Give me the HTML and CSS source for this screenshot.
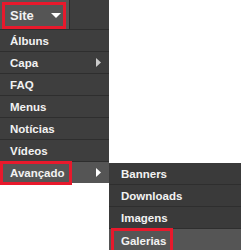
FILE: index.html
```html
<!DOCTYPE html>
<html>
<head>
  <title>Menu</title>
  <link rel="stylesheet" href="styles.css">
</head>
<body>
  <div class="nav">
    <div class="menu">
      <div class="site-row">
        <div class="site-btn">
          <span class="mark site-mark">Site
            <svg class="caret-down" width="10" height="5" viewBox="0 0 10 5"><path d="M0 0H10L5 5Z" fill="#fff"/></svg>
          </span>
        </div>
      </div>
      <div class="item">Álbuns</div>
      <div class="item">Capa
        <svg class="caret-right" width="5" height="9" viewBox="0 0 5 9"><path d="M0 0L5 4.5L0 9Z" fill="#ccc"/></svg>
      </div>
      <div class="item">FAQ</div>
      <div class="item">Menus</div>
      <div class="item">Notícias</div>
      <div class="item">Vídeos</div>
      <div class="item active">
        <span class="mark adv-mark">Avançado</span>
        <svg class="caret-right" width="5" height="9" viewBox="0 0 5 9"><path d="M0 0L5 4.5L0 9Z" fill="#fff"/></svg>
      </div>
    </div>
    <div class="submenu">
      <div class="item">Banners</div>
      <div class="item">Downloads</div>
      <div class="item">Imagens</div>
      <div class="item active"><span class="mark gal-mark">Galerias</span></div>
    </div>
  </div>
</body>
</html>
```

FILE: styles.css
```css
:root {
  --bg-menu: #3e3e3e;
  --bg-active: #555555;
  --line: #2e2e2e;
  --text: #f2f2f2;
  --red: #e8192c;
}

body {
  margin: 0;
  background: #ffffff;
  font-family: 'Liberation Sans', Arial, sans-serif;
  font-size: 11.5px;
  font-weight: bold;
  color: var(--text);
}

.nav {
  display: flex;
  align-items: flex-start;
}

.menu {
  width: 109px;
  background: var(--bg-menu);
}

.site-row {
  display: flex;
  height: 29px;
  border-bottom: 1px solid var(--line);
}

.site-btn {
  width: 70px;
  background: var(--bg-active);
  border-right: 1px solid #2a2a2a;
  padding: 2px 0 0 2px;
  box-sizing: border-box;
}

.mark {
  display: flex;
  align-items: center;
  border: 3px solid var(--red);
  box-sizing: border-box;
}

.site-mark {
  width: 64px;
  height: 27px;
  padding: 0 0 0 5px;
  font-size: 13px;
  justify-content: space-between;
  padding-right: 1px;
}

.caret-down {
  margin-right: 1px;
}

.item {
  display: flex;
  align-items: center;
  justify-content: space-between;
  height: 21px;
  padding: 0 8px 0 10px;
  border-bottom: 1px solid var(--line);
}

.menu .item:last-child {
  border-bottom: none;
}

.item.active {
  background: var(--bg-active);
}

.adv-mark {
  margin-left: -10px;
  width: 72px;
  height: 24px;
  padding-left: 7px;
}

.submenu {
  margin-top: 163px;
  flex: 1;
  background: #3a3a3a;
}

.submenu .item {
  padding-left: 12px;
}

.submenu .item:last-child {
  border-bottom: none;
}

.gal-mark {
  margin-left: -10px;
  width: 62px;
  height: 25px;
  margin-top: 2px;
  padding-left: 7px;
}
```
